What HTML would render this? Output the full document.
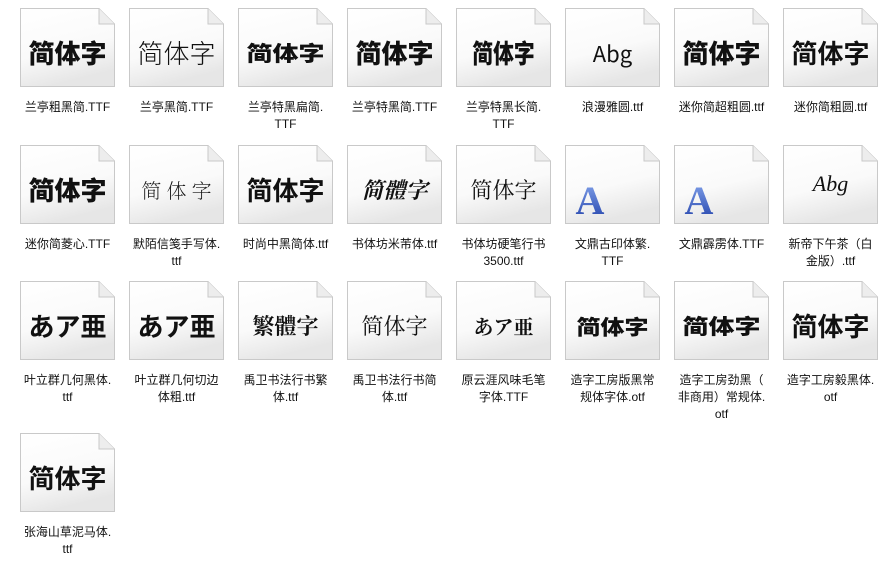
<!DOCTYPE html><html><head><meta charset="utf-8"><style>
body{margin:0;width:890px;height:564px;background:#fff;position:relative;overflow:hidden;font-family:"Liberation Sans","Noto Sans CJK SC",sans-serif}
.c{position:absolute;width:109px}
.i{position:absolute;left:0;top:0;width:95px;height:79px}
.i svg{position:absolute;left:0;top:0}
.t{position:absolute;left:0;top:30px;width:95px;text-align:center;font-size:26px;line-height:30px;color:#111;font-family:"Noto Sans CJK SC",sans-serif;white-space:nowrap}
.l{position:absolute;left:-7px;top:91px;width:109px;text-align:center;font-size:12px;line-height:17px;color:#111}
</style></head><body>
<svg width="0" height="0" style="position:absolute"><defs><linearGradient id="g" x1="0" y1="0" x2="0.3" y2="1"><stop offset="0" stop-color="#fff"/><stop offset="0.6" stop-color="#fafafa"/><stop offset="1" stop-color="#e6e6e6"/></linearGradient><linearGradient id="a" x1="0" y1="0" x2="0" y2="1"><stop offset="0" stop-color="#8aaaf0"/><stop offset="1" stop-color="#1f3fa8"/></linearGradient></defs></svg>
<div id="root"></div>
<script>
var items=[
["简体字","兰亭粗黑简.TTF",900,""],["简体字","兰亭黑简.TTF",300,""],["简体字","兰亭特黑扁简.<br>TTF",900,"transform:scaleY(.8)"],["简体字","兰亭特黑简.TTF",900,""],["简体字","兰亭特黑长简.<br>TTF",900,"transform:scaleX(.8)"],["Abg","浪漫雅圆.ttf",400,"font-size:22px"],["简体字","迷你简超粗圆.ttf",900,""],["简体字","迷你简粗圆.ttf",700,""],
["简体字","迷你简菱心.TTF",900,""],["简 体 字","默陌信笺手写体.<br>ttf",200,"font-size:20px;font-family:'Noto Serif CJK SC',serif"],["简体字","时尚中黑简体.ttf",700,""],["简體字","书体坊米芾体.ttf",700,"font-size:22px;font-family:'Noto Serif CJK SC',serif;font-style:italic"],["简体字","书体坊硬笔行书<br>3500.ttf",400,"font-size:22px;font-family:'Noto Serif CJK SC',serif"],["A","文鼎古印体繁.<br>TTF",700,"A"],["A","文鼎霹雳体.TTF",700,"A"],["Abg","新帝下午茶（白<br>金版）.ttf",300,"font-size:22px;font-style:italic;font-family:'Liberation Serif',serif;top:24px"],
["あア亜","叶立群几何黑体.<br>ttf",700,""],["あア亜","叶立群几何切边<br>体粗.ttf",700,""],["繁體字","禹卫书法行书繁<br>体.ttf",700,"font-size:22px;font-family:'Noto Serif CJK SC',serif"],["简体字","禹卫书法行书简<br>体.ttf",400,"font-size:22px;font-family:'Noto Serif CJK SC',serif"],["あア亜","原云涯风味毛笔<br>字体.TTF",700,"font-size:20px;font-family:'Noto Serif CJK SC',serif"],["简体字","造字工房版黑常<br>规体字体.otf",900,"font-size:24px;transform:scaleY(.85)"],["简体字","造字工房劲黑（<br>非商用）常规体.<br>otf",900,"font-size:26px;transform:scaleY(.8)"],["简体字","造字工房毅黑体.<br>otf",700,""],
["简体字","张海山草泥马体.<br>ttf",700,""]];
var ys=[8,145,281,433],h="";
items.forEach(function(it,k){var r=Math.floor(k/8),c=k%8;var x=20+109*c,y=ys[r];
var txt;
if(it[3]=="A"){txt='<svg width="95" height="79"><text x="25" y="69" font-family="Liberation Serif" font-weight="700" font-size="40" fill="url(#a)" text-anchor="middle">A</text></svg>';}
else txt='<div class="t" style="font-weight:'+it[2]+';'+it[3]+'">'+it[0]+'</div>';
h+='<div class="c" style="left:'+x+'px;top:'+y+'px"><div class="i"><svg width="95" height="79"><path d="M0.5,0.5H79L94.5,16V78.5H0.5Z" fill="url(#g)" stroke="#c9c9c9"/><path d="M79,0.5V16H94.5" fill="#ededed" stroke="#c9c9c9"/></svg>'+txt+'</div><div class="l">'+it[1]+'</div></div>';});
document.getElementById("root").innerHTML=h;
</script>
</body></html>
